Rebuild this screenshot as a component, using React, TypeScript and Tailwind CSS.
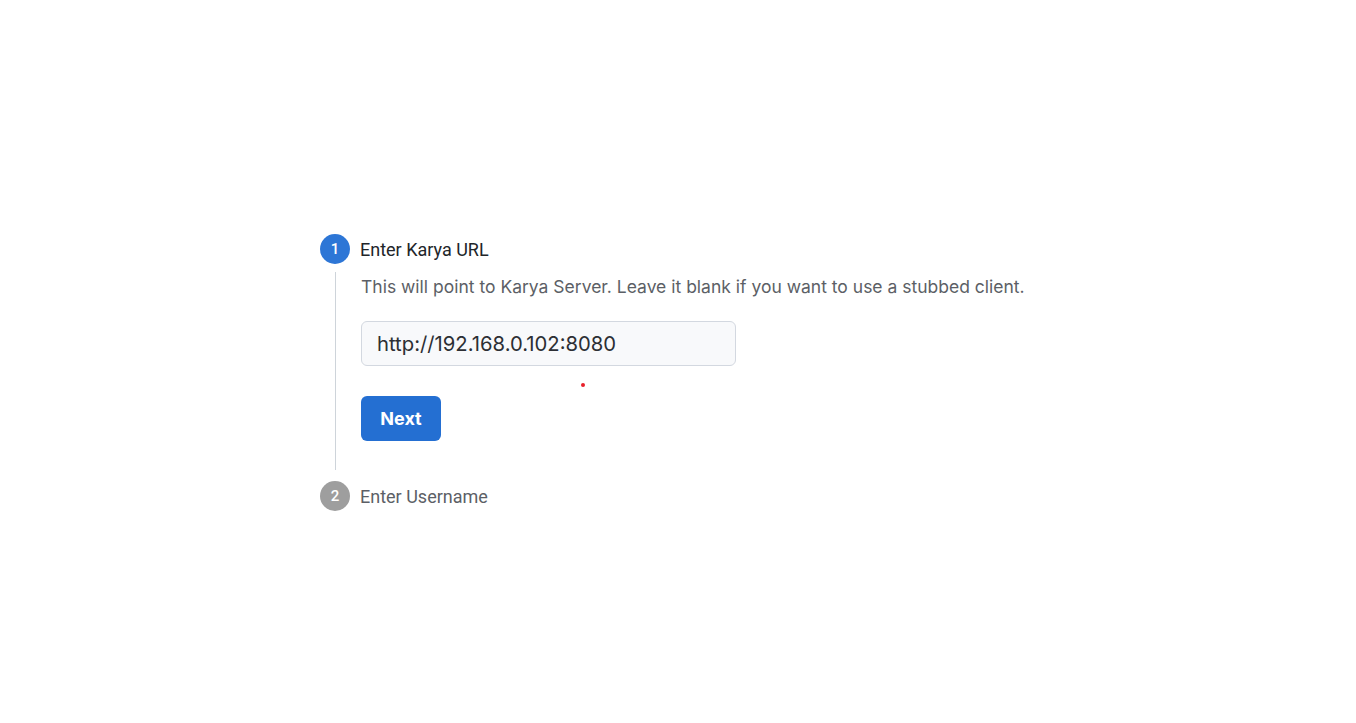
import React from "react";

export default function App() {
  return (
    <div className="min-h-screen bg-white flex justify-center pt-[234px]">
      <div className="w-[716px] flex flex-col">
        {/* Step 1 header */}
        <div className="flex items-center h-[30px]">
          <div className="w-[30px] h-[30px] rounded-full bg-[#2d76d6] text-white flex items-center justify-center text-[15px] font-medium font-['Roboto',sans-serif]">
            1
          </div>
          <span className="ml-[10px] text-[18px] text-[#212529] font-['Roboto',sans-serif]">
            Enter Karya URL
          </span>
        </div>

        {/* Step 1 body */}
        <div className="flex mt-[8px] mb-[11px]">
          <div className="w-[30px] flex justify-center">
            <div className="w-px bg-[#ced4da]" />
          </div>
          <div className="ml-[11px] flex flex-col pt-[3px] pb-[29px] font-['Inter',sans-serif]">
            <p className="text-[17.5px] leading-[24px] text-[#5c5f66]">
              This will point to Karya Server. Leave it blank if you want to use a stubbed client.
            </p>
            <div className="relative mt-[22px]">
              <input
                defaultValue="http://192.168.0.102:8080"
                className="w-[375px] h-[45px] rounded-[6px] border border-[#d3d8e0] bg-[#f8f9fb] px-[15px] text-[20.25px] text-[#2c2f34] outline-none font-['Inter',sans-serif]"
              />
              <span className="absolute left-[220px] top-[62px] w-[4px] h-[4px] rounded-full bg-[#e8202a]" />
            </div>
            <div className="mt-[30px]">
              <button className="w-[80px] h-[45px] rounded-[6px] bg-[#246fd2] text-white text-[18px] font-bold font-['Inter',sans-serif]">
                Next
              </button>
            </div>
          </div>
        </div>

        {/* Step 2 header */}
        <div className="flex items-center h-[30px]">
          <div className="w-[30px] h-[30px] rounded-full bg-[#9e9e9e] text-white flex items-center justify-center text-[15px] font-medium font-['Roboto',sans-serif]">
            2
          </div>
          <span className="ml-[10px] text-[18px] text-[#5c5f66] font-['Roboto',sans-serif]">
            Enter Username
          </span>
        </div>
      </div>
    </div>
  );
}
